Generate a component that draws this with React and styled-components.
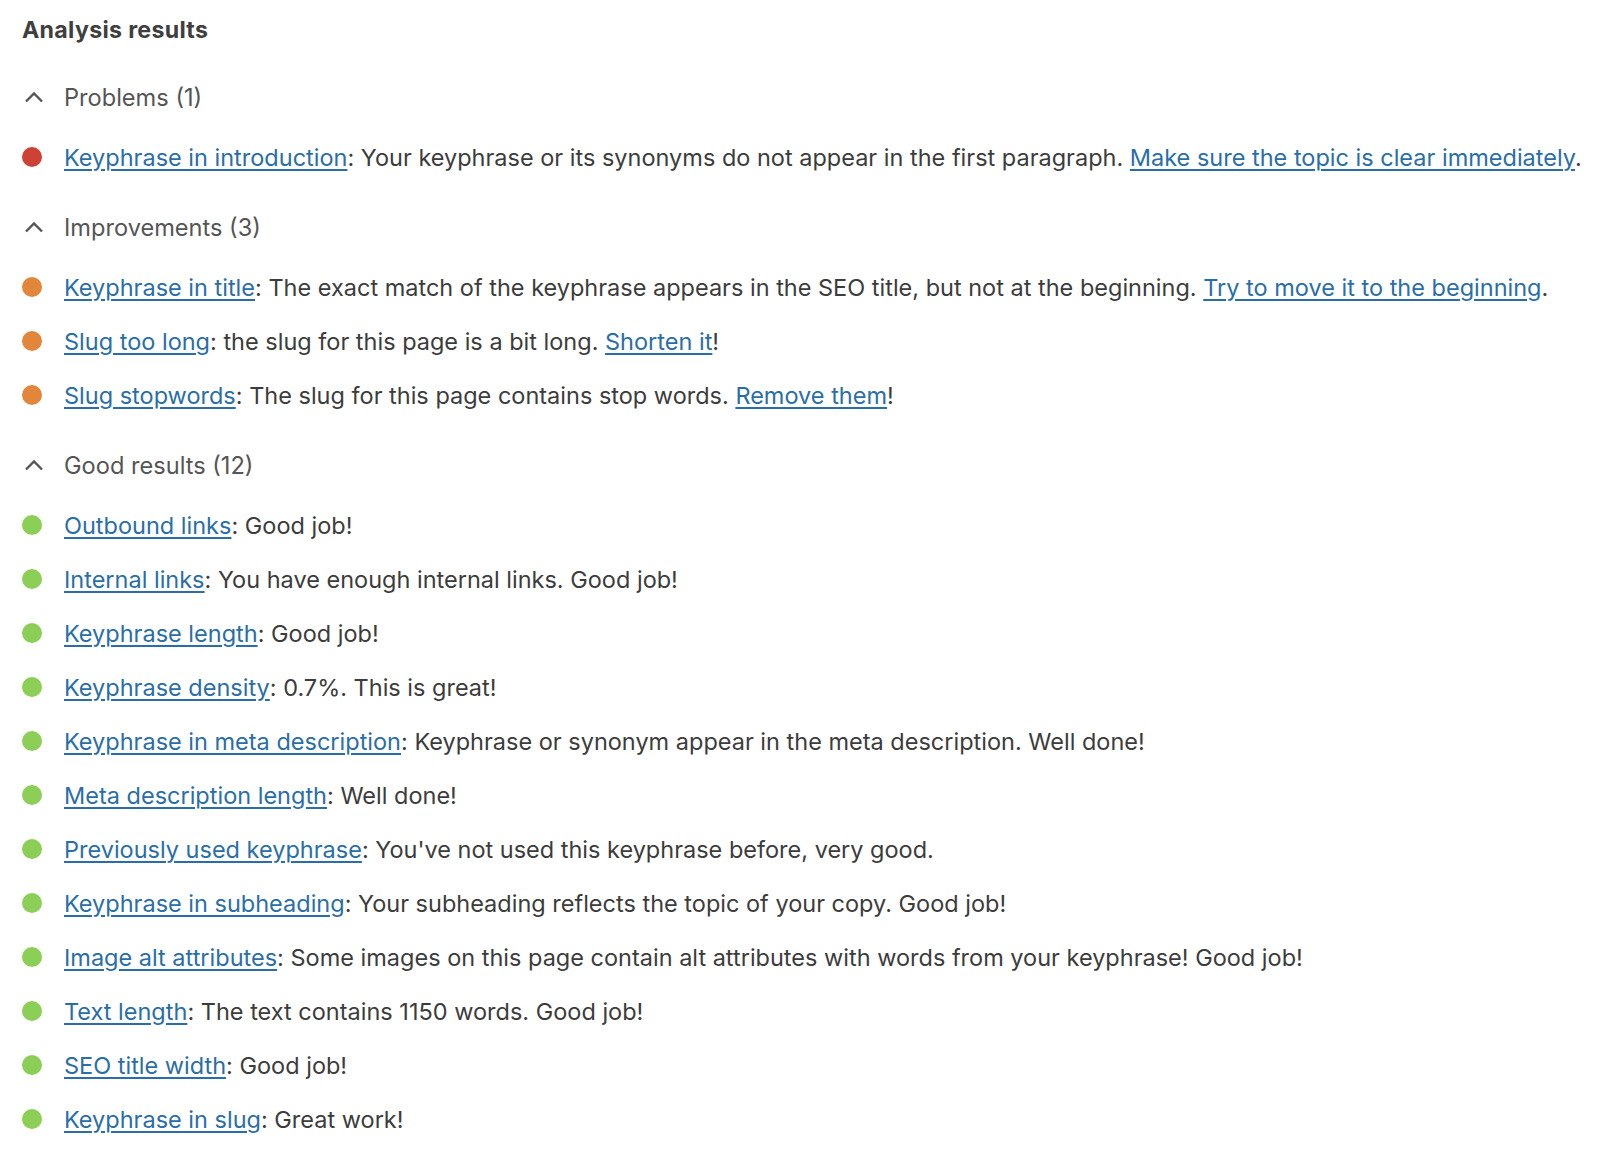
import React from 'react';
import styled, { createGlobalStyle } from 'styled-components';

const GlobalStyle = createGlobalStyle`
  body {
    margin: 0;
    background: #fff;
    font-family: Inter, "Noto Sans", sans-serif;
  }
`;

const Panel = styled.div`
  padding: 16px 22px 0 22px;
`;

const Title = styled.h2`
  margin: 0 0 20px 0;
  font-size: 23.2px;
  line-height: 28px;
  font-weight: 700;
  letter-spacing: 0.3px;
  color: #3f3f3f;
`;

const Section = styled.section`
  margin-bottom: 10px;
`;

const Header = styled.div`
  display: flex;
  align-items: center;
  height: 66px;
  font-size: 23.6px;
  color: #555;
`;

const Chevron = styled.svg`
  width: 20px;
  height: 12px;
  margin: 0 20px 0 2px;
  flex-shrink: 0;
`;

const List = styled.ul`
  list-style: none;
  margin: 0;
  padding: 0;
`;

const Row = styled.li`
  display: flex;
  align-items: center;
  height: 54px;
  font-size: 23.5px;
  color: #3c3c3c;
  white-space: nowrap;
`;

const colors = {
  bad: '#cc4336',
  ok: '#e2863b',
  good: '#8bcf57',
};

const Bullet = styled.span`
  width: 20px;
  height: 20px;
  border-radius: 50%;
  background: ${(p) => colors[p.$rating]};
  margin-right: 22px;
  flex-shrink: 0;
`;

const Link = styled.a`
  color: #2a6ea8;
  text-decoration: underline;
  text-decoration-thickness: 1.5px;
  text-underline-offset: 3px;
`;

const sections = [
  {
    title: 'Problems (1)',
    rating: 'bad',
    items: [
      ['Keyphrase in introduction', ': Your keyphrase or its synonyms do not appear in the first paragraph. ', 'Make sure the topic is clear immediately', '.'],
    ],
  },
  {
    title: 'Improvements (3)',
    rating: 'ok',
    items: [
      ['Keyphrase in title', ': The exact match of the keyphrase appears in the SEO title, but not at the beginning. ', 'Try to move it to the beginning', '.'],
      ['Slug too long', ': the slug for this page is a bit long. ', 'Shorten it', '!'],
      ['Slug stopwords', ': The slug for this page contains stop words. ', 'Remove them', '!'],
    ],
  },
  {
    title: 'Good results (12)',
    rating: 'good',
    items: [
      ['Outbound links', ': Good job!'],
      ['Internal links', ': You have enough internal links. Good job!'],
      ['Keyphrase length', ': Good job!'],
      ['Keyphrase density', ': 0.7%. This is great!'],
      ['Keyphrase in meta description', ': Keyphrase or synonym appear in the meta description. Well done!'],
      ['Meta description length', ': Well done!'],
      ['Previously used keyphrase', ": You've not used this keyphrase before, very good."],
      ['Keyphrase in subheading', ': Your subheading reflects the topic of your copy. Good job!'],
      ['Image alt attributes', ': Some images on this page contain alt attributes with words from your keyphrase! Good job!'],
      ['Text length', ': The text contains 1150 words. Good job!'],
      ['SEO title width', ': Good job!'],
      ['Keyphrase in slug', ': Great work!'],
    ],
  },
];

const App = () => (
  <>
    <GlobalStyle />
    <Panel>
      <Title>Analysis results</Title>
      {sections.map((section) => (
        <Section key={section.title}>
          <Header>
            <Chevron viewBox="0 0 20 12">
              <path d="M2 10.5 L10 2.5 L18 10.5" fill="none" stroke="#555" strokeWidth="2.4" />
            </Chevron>
            {section.title}
          </Header>
          <List>
            {section.items.map(([label, text, action, end]) => (
              <Row key={label}>
                <Bullet $rating={section.rating} />
                <span>
                  <Link href="#">{label}</Link>
                  {text}
                  {action && <Link href="#">{action}</Link>}
                  {end}
                </span>
              </Row>
            ))}
          </List>
        </Section>
      ))}
    </Panel>
  </>
);

export default App;
